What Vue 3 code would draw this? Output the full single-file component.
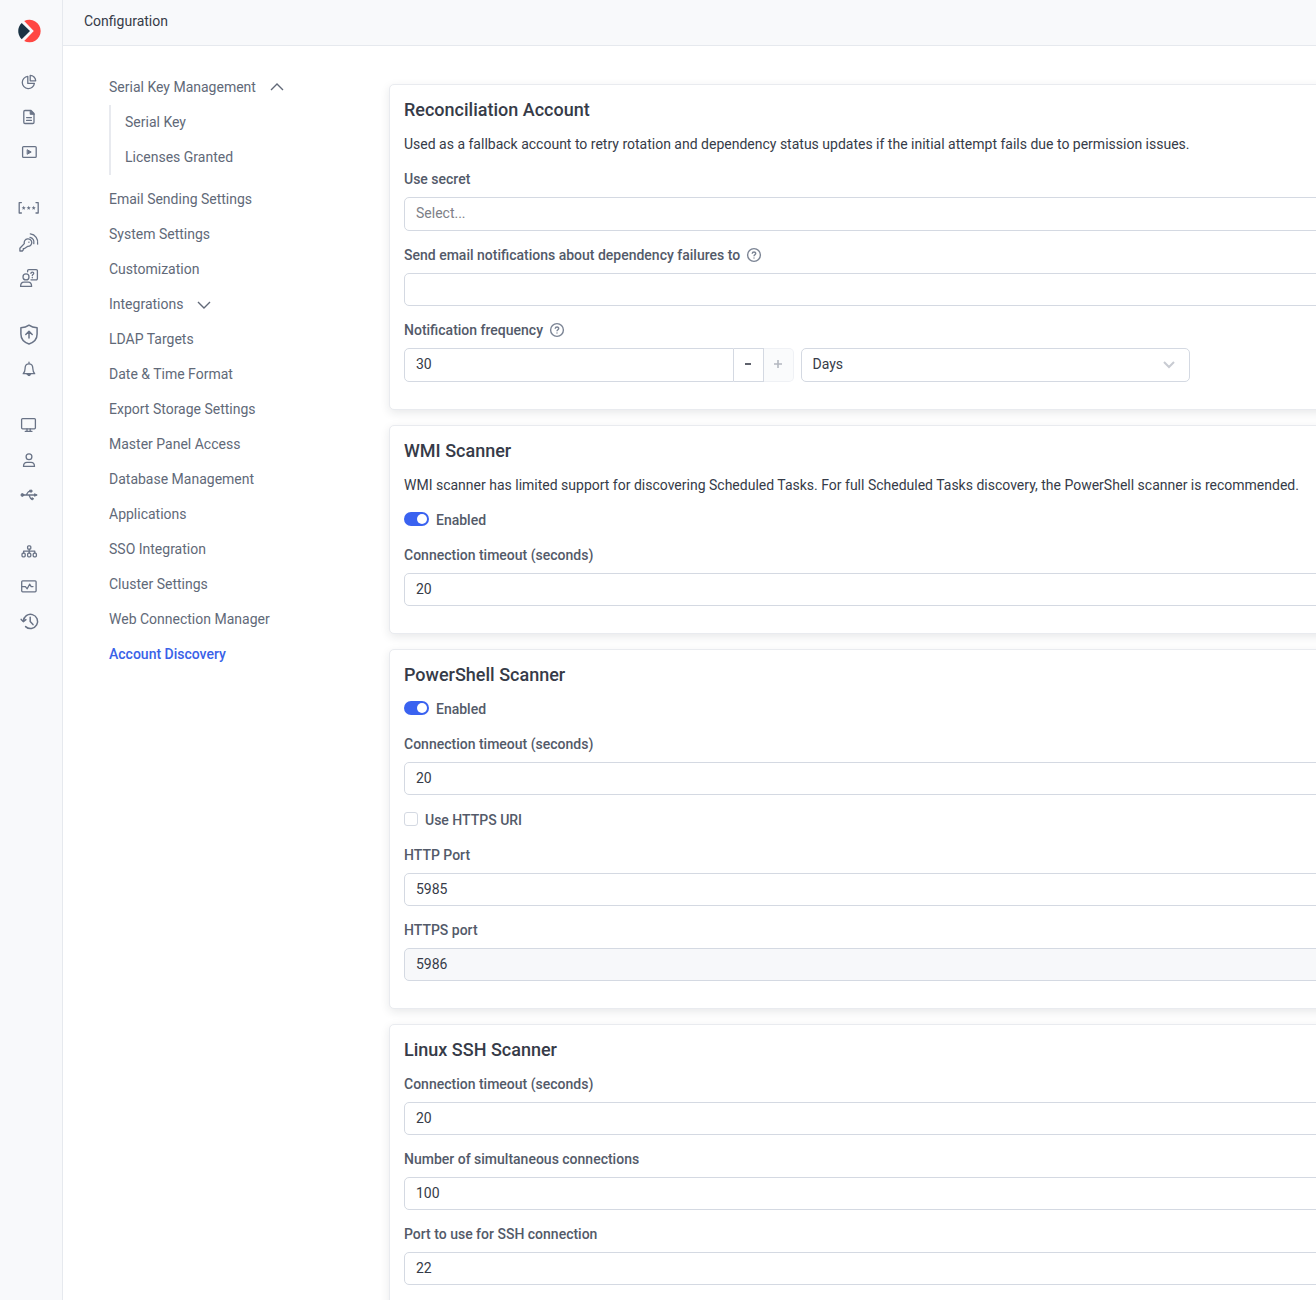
<script setup>
import { reactive } from 'vue'

const railGroups = [
  ['Dashboard', 'Reports', 'Sessions'],
  ['Secrets', 'Access Keys', 'Requests'],
  ['Elevation', 'Alerts'],
  ['Computers', 'Users', 'Devices'],
  ['Topology', 'Monitoring', 'History']
]

const navItems = [
  { label: 'Email Sending Settings' },
  { label: 'System Settings' },
  { label: 'Customization' },
  { label: 'Integrations', expandable: true },
  { label: 'LDAP Targets' },
  { label: 'Date & Time Format' },
  { label: 'Export Storage Settings' },
  { label: 'Master Panel Access' },
  { label: 'Database Management' },
  { label: 'Applications' },
  { label: 'SSO Integration' },
  { label: 'Cluster Settings' },
  { label: 'Web Connection Manager' },
  { label: 'Account Discovery', active: true }
]

const form = reactive({
  secret: '',
  emails: '',
  frequency: 30,
  unit: 'Days',
  wmiEnabled: true,
  wmiTimeout: '20',
  psEnabled: true,
  psTimeout: '20',
  useHttps: false,
  httpPort: '5985',
  httpsPort: '5986',
  sshTimeout: '20',
  sshConnections: '100',
  sshPort: '22'
})
</script>

<template>
  <div class="shell">
    <aside class="rail">
      <a href="#" class="logo" aria-label="Home">
        <svg width="24" height="24" viewBox="0 0 24 24">
          <path d="M4.7 3.9 13 12.1 4.7 20.2A11.3 11.3 0 0 1 4.7 3.9Z" fill="#1b3344" />
          <path d="M7.2 2A11.3 11.3 0 1 1 7.2 22.1L16.8 12.1Z" fill="#ff4742" />
        </svg>
      </a>
      <nav v-for="(group, g) in railGroups" :key="g" class="rail-group">
        <a v-for="name in group" :key="name" href="#" class="rail-link" :aria-label="name">
          <svg class="rail-icon" width="24" height="24" viewBox="0 0 24 24">
            <g v-if="name === 'Dashboard'">
              <path d="M10.8 6.4A6.1 6.1 0 1 0 17.4 13.4H10.8Z" />
              <path d="M13.2 5.4V10.8H18.7A5.5 5.5 0 0 0 13.2 5.4Z" />
            </g>
            <g v-else-if="name === 'Reports'">
              <path d="M8 5.5H14L17 8.5V17.3A1.2 1.2 0 0 1 15.8 18.5H8A1.2 1.2 0 0 1 6.8 17.3V6.7A1.2 1.2 0 0 1 8 5.5Z" />
              <path class="solid" d="M13.2 5.4V9.3H17Z" />
              <path d="M9.6 12.6H14.4M9.6 15.4H14.4" />
            </g>
            <g v-else-if="name === 'Sessions'">
              <rect x="5.6" y="6.6" width="13.6" height="10.8" rx="1" />
              <path class="solid" d="M10.5 9.9 14.2 12 10.5 14.1Z" />
            </g>
            <g v-else-if="name === 'Secrets'">
              <path d="M4.4 6.6H2.2V17H4.4M19 6.6H21.2V17H19" />
              <path class="star" d="M6.7 9.7 7.3 11.2 8.8 11.3 7.6 12.3 8 13.8 6.7 13 5.4 13.8 5.8 12.3 4.6 11.3 6.1 11.2ZM11.7 9.7 12.3 11.2 13.8 11.3 12.6 12.3 13 13.8 11.7 13 10.4 13.8 10.8 12.3 9.6 11.3 11.1 11.2ZM16.7 9.7 17.3 11.2 18.8 11.3 17.6 12.3 18 13.8 16.7 13 15.4 13.8 15.8 12.3 14.6 11.3 16.1 11.2Z" />
            </g>
            <g v-else-if="name === 'Access Keys'">
              <path d="M7.3 12.6 2.9 17.2V20H5.3L6.3 18.8V17.6H7.5L10.5 15.4A3.8 3.8 0 1 0 7.3 12.6Z" />
              <path d="M11.8 11.2h.2" />
              <path d="M13 6.3C16 6.8 17.4 9.5 16.8 12.6M13.3 2.9C18.2 3.4 21.6 8 20.6 13" />
            </g>
            <g v-else-if="name === 'Requests'">
              <circle cx="9" cy="10.9" r="3" />
              <path d="M3.6 20.4C3.6 17.4 5 16.2 7 16.2H11.2C13.4 16.2 14.6 17.6 14.6 20.4Z" />
              <path d="M10.6 5.8V4.8A1.2 1.2 0 0 1 11.8 3.6H19.2A1.2 1.2 0 0 1 20.4 4.8V12.6A1.2 1.2 0 0 1 19.2 13.8H14" />
              <path d="M13.9 7.4C14.1 5.7 16.8 5.8 16.7 7.5 16.6 8.6 15.3 8.6 15.3 9.6M15.3 11.5V11.8" />
            </g>
            <g v-else-if="name === 'Elevation'">
              <path class="stroke-bold" d="M12 3.2C14.4 5 17 5.7 20.1 5.8V12C20.1 17 16.7 20.4 12 22 7.3 20.4 3.9 17 3.9 12V5.8C7 5.7 9.6 5 12 3.2Z" />
              <path class="stroke-bold" d="M12 16V9.5M8.8 12.5 12 9.3 15.2 12.5" />
            </g>
            <g v-else-if="name === 'Alerts'">
              <path d="M6.2 16.7C8.2 15 8 13.2 8.1 11 8.2 8.4 9.8 6.9 11.9 6.9S15.7 8.4 15.8 11C15.9 13.2 15.8 15 17.7 16.7ZM12 5.2V6.8" />
              <path class="solid" d="M10.3 17.5H13.7A1.8 1.8 0 0 1 10.3 17.5Z" />
            </g>
            <g v-else-if="name === 'Computers'">
              <rect x="4.6" y="5.6" width="13.8" height="10.2" rx="1" />
              <path d="M8.2 18.3H15M10 16V18M13.2 16V18" />
            </g>
            <g v-else-if="name === 'Users'">
              <circle cx="12" cy="8.7" r="2.9" />
              <path d="M6.5 18.4C6.5 15.5 8 14.3 10 14.3H14C16 14.3 17.5 15.5 17.5 18.4Z" />
            </g>
            <g v-else-if="name === 'Devices'">
              <path d="M5 12H18.5M8.5 12C10.5 12 9.8 8.2 13 8.2M11.5 12C13 12 12.6 15.8 14.5 15.8" />
              <circle class="solid" cx="5.4" cy="12" r="1.4" />
              <rect class="solid" x="13" y="7.2" width="2" height="1.8" />
              <circle class="solid" cx="15.2" cy="15.8" r="1" />
              <path class="solid" d="M17.8 10.9 20.2 12 17.8 13.1Z" />
            </g>
            <g v-else-if="name === 'Topology'">
              <path d="M12.2 10.5V14M6.6 14V12.2H17.8V14" />
              <rect x="10.6" y="6.8" width="3.2" height="3.4" rx="1" />
              <rect x="5" y="14.2" width="3.2" height="3.6" rx="1" />
              <rect x="10.6" y="14.2" width="3.2" height="3.6" rx="1" />
              <rect x="16.2" y="14.2" width="3.2" height="3.6" rx="1" />
            </g>
            <g v-else-if="name === 'Monitoring'">
              <rect x="4.7" y="6.8" width="14.4" height="11" rx="1" />
              <path d="M5 12.6H8.4L10.2 14.8 12.6 10.2 14.2 12.6H16" />
            </g>
            <g v-else>
              <path class="stroke-bold" d="M6.4 12.2A7.1 7.1 0 1 1 8.6 17.6M13.2 8.2V12.6L16 15.6" />
              <path class="stroke-bold" d="M4.2 10.4 6.3 12.6 8.9 10.6" />
            </g>
          </svg>
        </a>
      </nav>
    </aside>

    <div class="page">
      <header class="topbar">
        <h1>Configuration</h1>
      </header>

      <div class="body">
        <nav class="side-nav" aria-label="Configuration sections">
          <button type="button" class="nav-item" aria-expanded="true">
            Serial Key Management
            <svg class="caret" width="14" height="14" viewBox="0 0 14 14"><path d="M1 10 7 4 13 10" /></svg>
          </button>
          <div class="sub-nav">
            <a href="#" class="nav-item">Serial Key</a>
            <a href="#" class="nav-item">Licenses Granted</a>
          </div>
          <template v-for="item in navItems" :key="item.label">
            <button v-if="item.expandable" type="button" class="nav-item" aria-expanded="false">
              {{ item.label }}
              <svg class="caret" width="14" height="14" viewBox="0 0 14 14"><path d="M1 5 7 11 13 5" /></svg>
            </button>
            <a v-else href="#" class="nav-item" :class="{ active: item.active }">{{ item.label }}</a>
          </template>
        </nav>

        <main class="cards">
          <section class="card">
            <h2>Reconciliation Account</h2>
            <p>Used as a fallback account to retry rotation and dependency status updates if the initial attempt fails due to permission issues.</p>
            <div class="field">
              <label for="secret">Use secret</label>
              <select id="secret" v-model="form.secret" class="control placeholder">
                <option value="">Select...</option>
              </select>
            </div>
            <div class="field">
              <div class="label-row">
                <label for="emails">Send email notifications about dependency failures to</label>
                <svg class="help" width="16" height="16" viewBox="0 0 16 16">
                  <circle cx="8" cy="8" r="6.4" />
                  <path d="M6.2 6.7C6.3 4.4 9.8 4.5 9.7 6.6 9.6 7.8 8 7.8 8 9.2M8 10.5V11.6" />
                </svg>
              </div>
              <input id="emails" v-model="form.emails" type="text" class="control" />
            </div>
            <div class="field">
              <div class="label-row">
                <label for="frequency">Notification frequency</label>
                <svg class="help" width="16" height="16" viewBox="0 0 16 16">
                  <circle cx="8" cy="8" r="6.4" />
                  <path d="M6.2 6.7C6.3 4.4 9.8 4.5 9.7 6.6 9.6 7.8 8 7.8 8 9.2M8 10.5V11.6" />
                </svg>
              </div>
              <div class="frequency">
                <div class="stepper">
                  <input id="frequency" v-model.number="form.frequency" type="text" inputmode="numeric" class="control" />
                  <button type="button" aria-label="Decrease" @click="form.frequency--">
                    <svg width="10" height="10" viewBox="0 0 10 10"><path d="M2 5H8" /></svg>
                  </button>
                  <button type="button" aria-label="Increase" disabled>
                    <svg width="10" height="10" viewBox="0 0 10 10"><path d="M1 5H9M5 1V9" /></svg>
                  </button>
                </div>
                <div class="select-wrap">
                  <select v-model="form.unit" class="control" aria-label="Frequency unit">
                    <option>Days</option>
                    <option>Weeks</option>
                  </select>
                  <svg class="select-caret" width="14" height="14" viewBox="0 0 14 14"><path d="M2 5 7 10 12 5" /></svg>
                </div>
              </div>
            </div>
          </section>

          <section class="card">
            <h2>WMI Scanner</h2>
            <p>WMI scanner has limited support for discovering Scheduled Tasks. For full Scheduled Tasks discovery, the PowerShell scanner is recommended.</p>
            <label class="option">
              <input v-model="form.wmiEnabled" type="checkbox" role="switch" class="switch" />
              Enabled
            </label>
            <div class="field">
              <label for="wmi-timeout">Connection timeout (seconds)</label>
              <input id="wmi-timeout" v-model="form.wmiTimeout" type="text" class="control" />
            </div>
          </section>

          <section class="card">
            <h2>PowerShell Scanner</h2>
            <label class="option">
              <input v-model="form.psEnabled" type="checkbox" role="switch" class="switch" />
              Enabled
            </label>
            <div class="field">
              <label for="ps-timeout">Connection timeout (seconds)</label>
              <input id="ps-timeout" v-model="form.psTimeout" type="text" class="control" />
            </div>
            <label class="option after-field">
              <input v-model="form.useHttps" type="checkbox" class="tick" />
              Use HTTPS URI
            </label>
            <div class="field">
              <label for="http-port">HTTP Port</label>
              <input id="http-port" v-model="form.httpPort" type="text" class="control" />
            </div>
            <div class="field">
              <label for="https-port">HTTPS port</label>
              <input id="https-port" v-model="form.httpsPort" type="text" class="control" disabled />
            </div>
          </section>

          <section class="card">
            <h2>Linux SSH Scanner</h2>
            <div class="field">
              <label for="ssh-timeout">Connection timeout (seconds)</label>
              <input id="ssh-timeout" v-model="form.sshTimeout" type="text" class="control" />
            </div>
            <div class="field">
              <label for="ssh-connections">Number of simultaneous connections</label>
              <input id="ssh-connections" v-model="form.sshConnections" type="text" class="control" />
            </div>
            <div class="field">
              <label for="ssh-port">Port to use for SSH connection</label>
              <input id="ssh-port" v-model="form.sshPort" type="text" class="control" />
            </div>
          </section>
        </main>
      </div>
    </div>
  </div>
</template>

<style>
body {
  margin: 0;
  background: #fff;
}
</style>

<style scoped>
.shell,
.shell * {
  box-sizing: border-box;
}

.shell {
  display: flex;
  height: 100vh;
  overflow: hidden;
  font: 14px/24px Roboto, 'Liberation Sans', sans-serif;
  color: #363b48;
}

.shell a {
  text-decoration: none;
}

.shell button {
  font: inherit;
  cursor: pointer;
}

/* Icon rail */
.rail {
  flex: none;
  display: flex;
  flex-direction: column;
  gap: 21px;
  width: 63px;
  padding: 19px 4px 0 0;
  background: #f8f9fb;
  border-right: 1px solid #e6e9ee;
}

.logo {
  display: flex;
  justify-content: center;
}

.rail-group {
  display: flex;
  flex-direction: column;
}

.rail-link {
  display: flex;
  align-items: center;
  justify-content: center;
  height: 35px;
}

.rail-icon {
  fill: none;
  stroke: #697386;
  stroke-width: 1.3;
  stroke-linecap: round;
  stroke-linejoin: round;
}

.rail-icon .solid {
  fill: #697386;
  stroke-width: 1;
}

.rail-icon .star {
  fill: #697386;
  stroke: none;
}

.rail-icon .stroke-bold {
  stroke-width: 1.5;
}

/* Page frame */
.page {
  flex: 1;
  min-width: 0;
  display: flex;
  flex-direction: column;
}

.topbar {
  flex: none;
  height: 46px;
  padding: 9px 21px;
  background: #f8f9fb;
  border-bottom: 1px solid #e6e9ee;
}

.topbar h1 {
  margin: 0;
  font-size: 14px;
  font-weight: 400;
}

.body {
  flex: 1;
  min-height: 0;
  display: flex;
  overflow: hidden auto;
  scrollbar-width: none;
}

/* Section navigation */
.side-nav {
  flex: none;
  display: flex;
  flex-direction: column;
  width: 326px;
  padding: 24px 46px;
}

.nav-item {
  display: flex;
  align-items: center;
  gap: 14px;
  height: 35px;
  padding: 0 0 2px;
  border: 0;
  background: none;
  color: #616978;
}

.nav-item.active {
  color: #3a62e8;
  font-weight: 500;
}

.sub-nav {
  margin-bottom: 7px;
  padding-left: 14px;
  border-left: 2px solid #e8eaef;
}

.caret {
  fill: none;
  stroke: #616978;
  stroke-width: 1.4;
}

/* Cards */
.cards {
  flex: 1;
  min-width: 0;
  display: flex;
  flex-direction: column;
  gap: 15px;
  height: max-content;
  padding: 38px 0;
}

/* The cards run on past the right edge of the page */
.card {
  margin-right: -32px;
  padding: 13px 14px 27px;
  border: 1px solid #e9ebef;
  border-radius: 5px;
  background: #fff;
  box-shadow: 0 3px 10px rgba(30, 35, 50, 0.1);
}

.card h2 {
  margin: 0 0 10px;
  font-size: 18px;
  font-weight: 500;
  line-height: 24px;
}

.card p {
  margin: 0 0 11px;
}

.field + .field {
  margin-top: 12px;
}

.option + .field {
  margin-top: 11px;
}

.field label,
.option {
  color: #535a69;
  font-weight: 500;
}

.field > label {
  display: block;
  margin-bottom: 6px;
}

.label-row {
  display: flex;
  align-items: center;
  gap: 6px;
  margin-bottom: 6px;
}

.help {
  fill: none;
  stroke: #7b8494;
  stroke-width: 1.4;
}

.control {
  display: block;
  width: 100%;
  height: 34px;
  margin: 0;
  padding: 0 11px 2px;
  border: 1px solid #d4d9e2;
  border-radius: 5px;
  background: #fff;
  color: #363b48;
  font: inherit;
  appearance: none;
  outline: none;
}

.field > input.control {
  height: 33px;
}

.control.placeholder {
  color: #7d8087;
}

.control:disabled {
  background: #f7f8fa;
}

.frequency {
  display: flex;
  gap: 7px;
  max-width: 786px;
}

.stepper,
.select-wrap {
  flex: 1;
  min-width: 0;
}

.stepper {
  display: flex;
}

.stepper .control {
  flex: 1;
  min-width: 0;
  border-radius: 5px 0 0 5px;
}

.stepper button {
  flex: none;
  display: flex;
  align-items: center;
  justify-content: center;
  width: 30px;
  padding: 0 0 2px;
  border: 1px solid #d4d9e2;
  border-left: 0;
  background: #fff;
}

.stepper button:last-child {
  border-radius: 0 5px 5px 0;
}

.stepper button:disabled {
  border-color: #eff1f5;
  background: #fafbfc;
}

.stepper svg {
  fill: none;
  stroke: #363b48;
  stroke-width: 1.6;
}

.stepper button:disabled svg {
  stroke: #b4b8c0;
}

.select-wrap {
  position: relative;
}

.select-caret {
  position: absolute;
  top: 9px;
  right: 14px;
  fill: none;
  stroke: #c8cbd2;
  stroke-width: 2;
  pointer-events: none;
}

.option {
  display: flex;
  align-items: center;
  gap: 7px;
}

.option.after-field {
  margin-top: 13px;
}

.switch,
.tick {
  flex: none;
  height: 14px;
  margin: 0 0 2px;
  appearance: none;
}

.switch {
  display: flex;
  align-items: center;
  width: 25px;
  padding: 2px;
  border-radius: 7px;
  background: #c8cbd2;
}

.switch::before {
  content: '';
  width: 10px;
  height: 10px;
  border-radius: 50%;
  background: #fff;
}

.switch:checked {
  justify-content: flex-end;
  background: #3a62f0;
}

.tick {
  width: 14px;
  border: 1px solid #d4d9e2;
  border-radius: 3px;
  background: #fff;
}

.tick:checked {
  background: #3a62f0;
}
</style>
